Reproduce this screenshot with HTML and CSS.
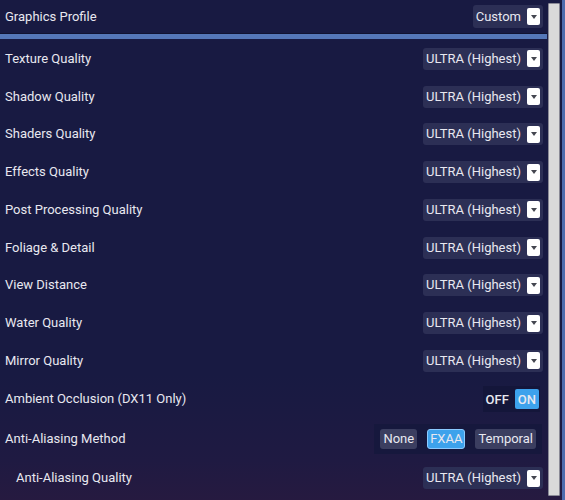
FILE: index.html
```html
<!DOCTYPE html>
<html>
<head>
<meta charset="utf-8">
<link rel="stylesheet" href="styles.css">
</head>
<body>
<div class="page">
  <div class="panel">
    <div class="row header">
      <span class="label">Graphics Profile</span>
      <div class="dropdown custom"><span>Custom</span><span class="arrow"></span></div>
    </div>
    <div class="separator"></div>
    <div class="list">
      <div class="row"><span class="label">Texture Quality</span><div class="dropdown"><span>ULTRA (Highest)</span><span class="arrow"></span></div></div>
      <div class="row"><span class="label">Shadow Quality</span><div class="dropdown"><span>ULTRA (Highest)</span><span class="arrow"></span></div></div>
      <div class="row"><span class="label">Shaders Quality</span><div class="dropdown"><span>ULTRA (Highest)</span><span class="arrow"></span></div></div>
      <div class="row"><span class="label">Effects Quality</span><div class="dropdown"><span>ULTRA (Highest)</span><span class="arrow"></span></div></div>
      <div class="row"><span class="label">Post Processing Quality</span><div class="dropdown"><span>ULTRA (Highest)</span><span class="arrow"></span></div></div>
      <div class="row"><span class="label">Foliage &amp; Detail</span><div class="dropdown"><span>ULTRA (Highest)</span><span class="arrow"></span></div></div>
      <div class="row"><span class="label">View Distance</span><div class="dropdown"><span>ULTRA (Highest)</span><span class="arrow"></span></div></div>
      <div class="row"><span class="label">Water Quality</span><div class="dropdown"><span>ULTRA (Highest)</span><span class="arrow"></span></div></div>
      <div class="row"><span class="label">Mirror Quality</span><div class="dropdown"><span>ULTRA (Highest)</span><span class="arrow"></span></div></div>
      <div class="row row-toggle"><span class="label">Ambient Occlusion (DX11 Only)</span>
        <div class="toggle"><span class="off">OFF</span><span class="on">ON</span></div>
      </div>
      <div class="row row-buttons"><span class="label">Anti-Aliasing Method</span>
        <div class="btn-group"><span class="btn">None</span><span class="btn active">FXAA</span><span class="btn">Temporal</span></div>
      </div>
      <div class="row row-sub"><span class="label sub">Anti-Aliasing Quality</span><div class="dropdown"><span>ULTRA (Highest)</span><span class="arrow"></span></div></div>
    </div>
  </div>
  <div class="scrollbar"></div>
  <div class="edge"></div>
</div>
</body>
</html>
```

FILE: styles.css
```css
html, body {
  margin: 0;
  padding: 0;
}
body {
  width: 565px;
  height: 500px;
  overflow: hidden;
  background: linear-gradient(to bottom, #181a42 0%, #181a42 75%, #1f1a42 92%, #261a40 100%);
  font-family: Roboto, "Noto Sans", sans-serif;
  font-size: 13px;
  color: #e8e8f0;
}
.page {
  display: flex;
  height: 500px;
}
.panel {
  width: 547px;
  flex: none;
  display: flex;
  flex-direction: column;
}
.row {
  display: flex;
  align-items: center;
  justify-content: space-between;
  height: 37.75px;
  padding: 0 4px 0 5px;
  box-sizing: border-box;
}
.header {
  height: 33px;
  padding-top: 0;
}
.label {
  line-height: 16px;
}
.label.sub {
  padding-left: 11px;
}
.separator {
  height: 6px;
  box-sizing: border-box;
  border-top: 1px solid #111331;
  background: #5577b8;
  margin-bottom: 1px;
}
.dropdown {
  display: flex;
  align-items: center;
  height: 22px;
  box-sizing: border-box;
  padding: 0 3px 0 3px;
  background: #2c2f55;
  border-radius: 3px;
  gap: 6px;
  line-height: 16px;
}
.dropdown.custom {
  height: 23px;
}
.arrow {
  width: 13px;
  height: 17px;
  background: #ffffff;
  border-radius: 2px;
  display: flex;
  align-items: center;
  justify-content: center;
}
.arrow::after {
  content: "";
  width: 0;
  height: 0;
  border-left: 3.5px solid transparent;
  border-right: 3.5px solid transparent;
  border-top: 4px solid #444650;
}
.row-toggle {
  height: 39px;
  padding-right: 7px;
}
.toggle {
  display: flex;
  align-items: center;
  height: 26px;
  box-sizing: border-box;
  padding: 3px 1px 3px 3px;
  background: #14163a;
  gap: 6px;
}
.toggle .off {
  font-weight: 500;
}
.toggle .on {
  height: 20px;
  display: flex;
  align-items: center;
  padding: 0 3px;
  background: #3da2ec;
  border-radius: 2px;
  font-weight: 500;
}
.row-buttons {
  height: 40px;
  padding-right: 5px;
}
.btn-group {
  display: flex;
  align-items: center;
  gap: 10px;
  height: 30px;
  box-sizing: border-box;
  padding: 0 6px;
  background: #16183d;
}
.btn {
  height: 20px;
  display: flex;
  align-items: center;
  padding: 0 3px;
  background: #3b3e60;
  border-radius: 3px;
  box-sizing: border-box;
}
.btn.active {
  background: #3da2ec;
  border: 1px solid #8ccaff;
  padding: 0 2px;
}
.row-sub {
  height: 39px;
}
.scrollbar {
  width: 12px;
  margin: 3px 2px 4px 1px;
  box-sizing: border-box;
  background: #d9d9d9;
  border: 1px solid #8a8a96;
  border-radius: 1px;
  flex: none;
}
.edge {
  width: 3px;
  background: #4e6cae;
  flex: none;
}
```
